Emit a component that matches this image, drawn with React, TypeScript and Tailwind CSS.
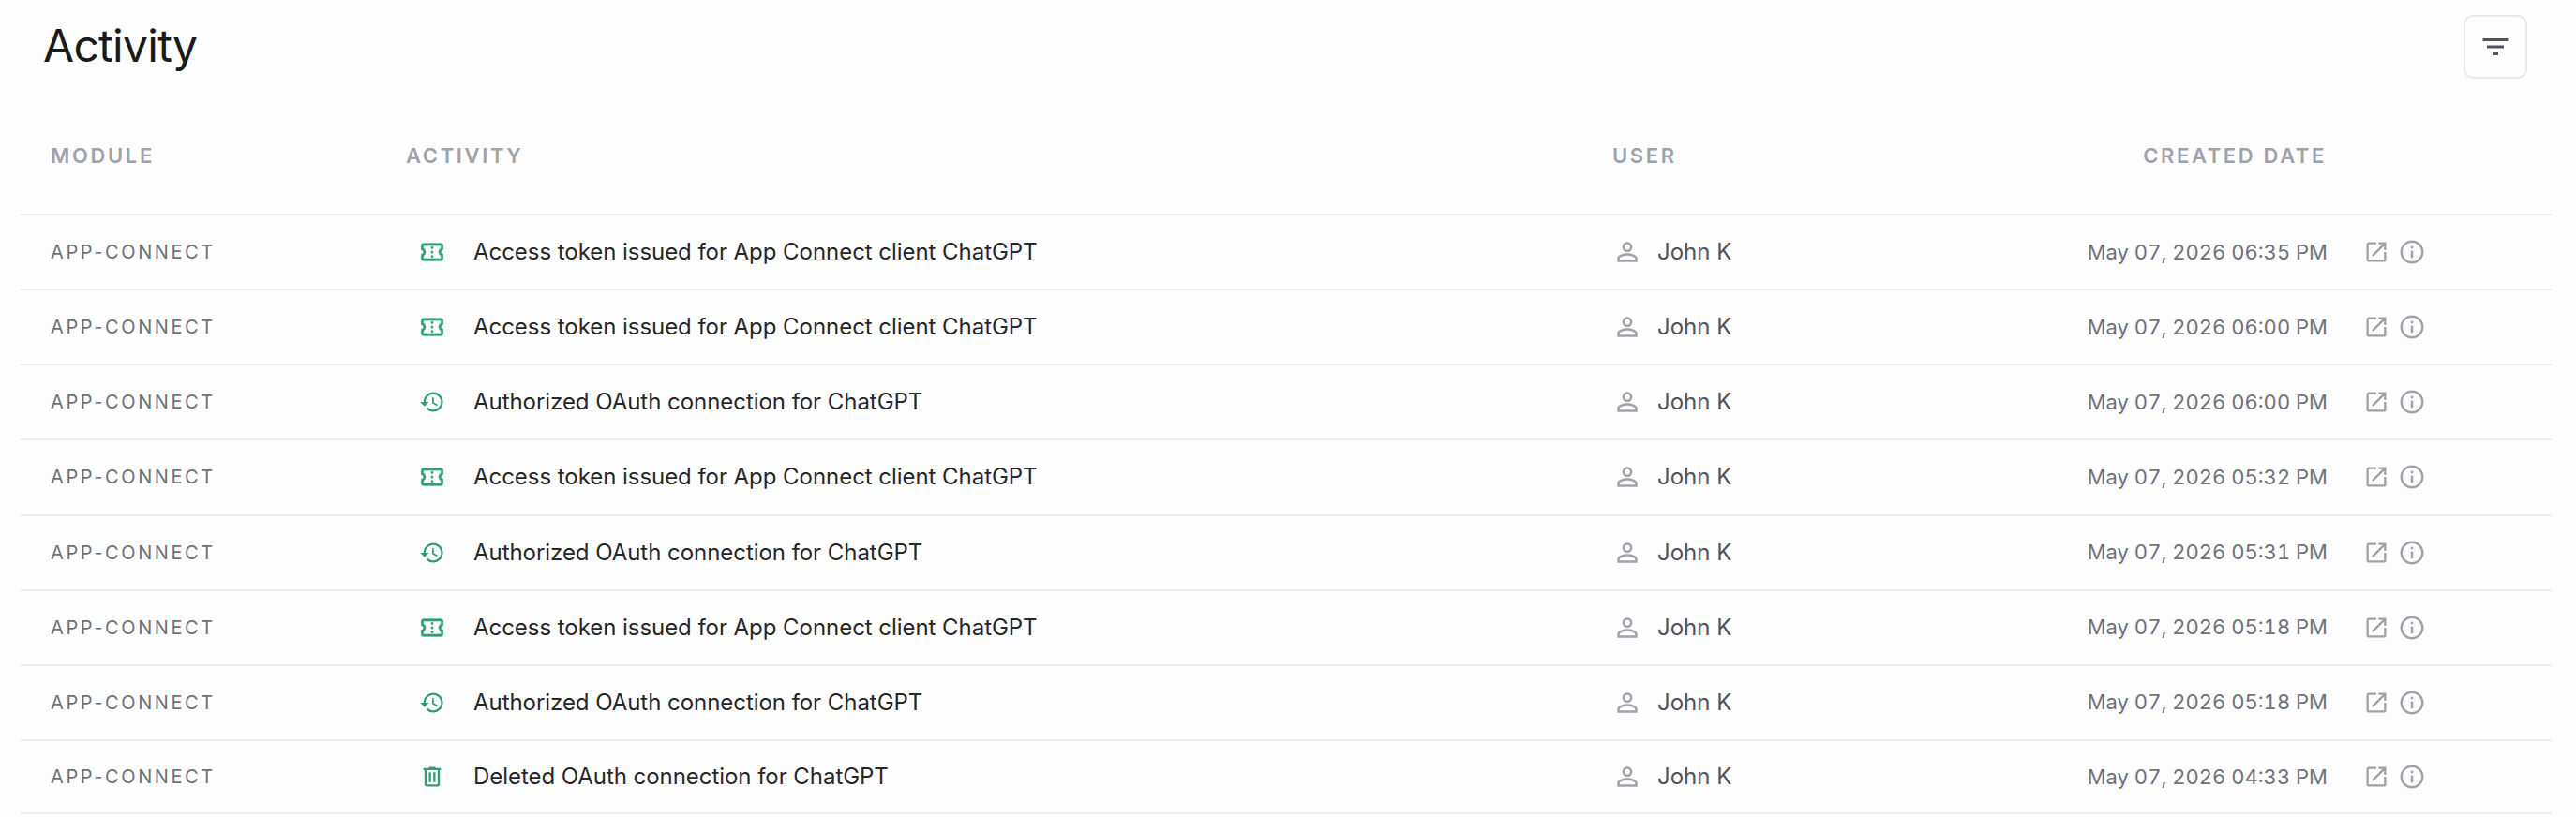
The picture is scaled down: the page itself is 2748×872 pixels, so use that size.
import React from "react";
import {
  MdFilterList,
  MdHistory,
  MdInfoOutline,
  MdOpenInNew,
  MdPersonOutline,
} from "react-icons/md";

const TicketIcon = () => (
  <svg viewBox="0 -960 960 960" fill="currentColor" stroke="currentColor" strokeWidth="20" className="w-[28px] h-[28px]">
    <path d="M480-280q17 0 28.5-11.5T520-320q0-17-11.5-28.5T480-360q-17 0-28.5 11.5T440-320q0 17 11.5 28.5T480-280Zm0-160q17 0 28.5-11.5T520-480q0-17-11.5-28.5T480-520q-17 0-28.5 11.5T440-480q0 17 11.5 28.5T480-440Zm0-160q17 0 28.5-11.5T520-640q0-17-11.5-28.5T480-680q-17 0-28.5 11.5T440-640q0 17 11.5 28.5T480-600Zm320 440H160q-33 0-56.5-23.5T80-240v-160q33 0 56.5-23.5T160-480q0-33-23.5-56.5T80-560v-160q0-33 23.5-56.5T160-800h640q33 0 56.5 23.5T880-720v160q-33 0-56.5 23.5T800-480q0 33 23.5 56.5T880-400v160q0 33-23.5 56.5T800-160Zm0-80v-102q-37-22-58.5-58.5T720-480q0-43 21.5-79.5T800-618v-102H160v102q37 22 58.5 58.5T240-480q0 43-21.5 79.5T160-342v102h640Z" />
  </svg>
);

const TrashIcon = () => (
  <svg viewBox="0 -960 960 960" fill="currentColor" className="w-[28px] h-[28px]">
    <path d="M280-120q-33 0-56.5-23.5T200-200v-520h-40v-80h200v-40h240v40h200v80h-40v520q0 33-23.5 56.5T680-120H280Zm400-600H280v520h400v-520ZM360-280h80v-360h-80v360Zm160 0h80v-360h-80v360Z" />
  </svg>
);

const HistoryIcon = () => <MdHistory className="w-[28px] h-[28px]" />;

const TOKEN = "Access token issued for App Connect client ChatGPT";
const OAUTH = "Authorized OAuth connection for ChatGPT";

const rows = [
  { icon: <TicketIcon />, text: TOKEN, date: "May 07, 2026 06:35 PM" },
  { icon: <TicketIcon />, text: TOKEN, date: "May 07, 2026 06:00 PM" },
  { icon: <HistoryIcon />, text: OAUTH, date: "May 07, 2026 06:00 PM" },
  { icon: <TicketIcon />, text: TOKEN, date: "May 07, 2026 05:32 PM" },
  { icon: <HistoryIcon />, text: OAUTH, date: "May 07, 2026 05:31 PM" },
  { icon: <TicketIcon />, text: TOKEN, date: "May 07, 2026 05:18 PM" },
  { icon: <HistoryIcon />, text: OAUTH, date: "May 07, 2026 05:18 PM" },
  { icon: <TrashIcon />, text: "Deleted OAuth connection for ChatGPT", date: "May 07, 2026 04:33 PM" },
];

export default function App() {
  return (
    <div className="w-[2748px] h-[872px] overflow-hidden bg-[#fdfdfd] font-[Inter,sans-serif] pl-[22px] pr-[26px]">
      {/* Title bar */}
      <div className="flex items-center justify-between h-[100px] pl-[24px] pr-[26px]">
        <h1 className="text-[48px] leading-none font-normal text-[#1a1a1a] tracking-[-0.015em] -mt-[2px]">
          Activity
        </h1>
        <button className="flex items-center justify-center w-[68px] h-[68px] rounded-[10px] border-2 border-[#e9e9e7] bg-[#fdfdfd] text-[#52525b]">
          <MdFilterList className="w-[36px] h-[36px]" />
        </button>
      </div>

      {/* Header */}
      <div className="grid grid-cols-[380px_1287px_1fr] items-center h-[79px] mt-[27px] pl-[32px] rounded-[12px] bg-[#fefefe] text-[22px] font-semibold tracking-[0.12em] text-[#a1a1aa]">
        <div>MODULE</div>
        <div className="-ml-[1px]">ACTIVITY</div>
        <div className="flex items-center -ml-[1px]">
          <span>USER</span>
          <span className="ml-auto mr-[240px]">CREATED DATE</span>
        </div>
      </div>

      {/* Rows */}
      <div className="mt-[22px]">
        {rows.map((row, i) => (
          <div
            key={i}
            className="grid grid-cols-[380px_1287px_1fr] items-center h-[80.15px] pl-[31px] border-t-2 border-[#eeeeec] last:border-b-2"
          >
            <div className="pl-[1px] text-[20px] tracking-[0.13em] text-[#71717a]">APP-CONNECT</div>
            <div className="flex items-center pl-[14px]">
              <span className="flex items-center justify-center w-[28px] text-[#2f9e78]">{row.icon}</span>
              <span className="ml-[30px] text-[24px] tracking-[-0.002em] text-[#27272a]">{row.text}</span>
            </div>
            <div className="flex items-center">
              <MdPersonOutline className="w-[32px] h-[32px] text-[#a1a1aa]" />
              <span className="ml-[16px] text-[24px] text-[#52525b]">John K</span>
              <span className="ml-auto text-[22px] tabular-nums text-[#71717a]">{row.date}</span>
              <div className="flex items-center w-[239px] pl-[38px] gap-[9px] text-[#a1a1aa]">
                <MdOpenInNew className="w-[28px] h-[28px]" />
                <MdInfoOutline className="w-[30px] h-[30px]" />
              </div>
            </div>
          </div>
        ))}
      </div>
    </div>
  );
}
